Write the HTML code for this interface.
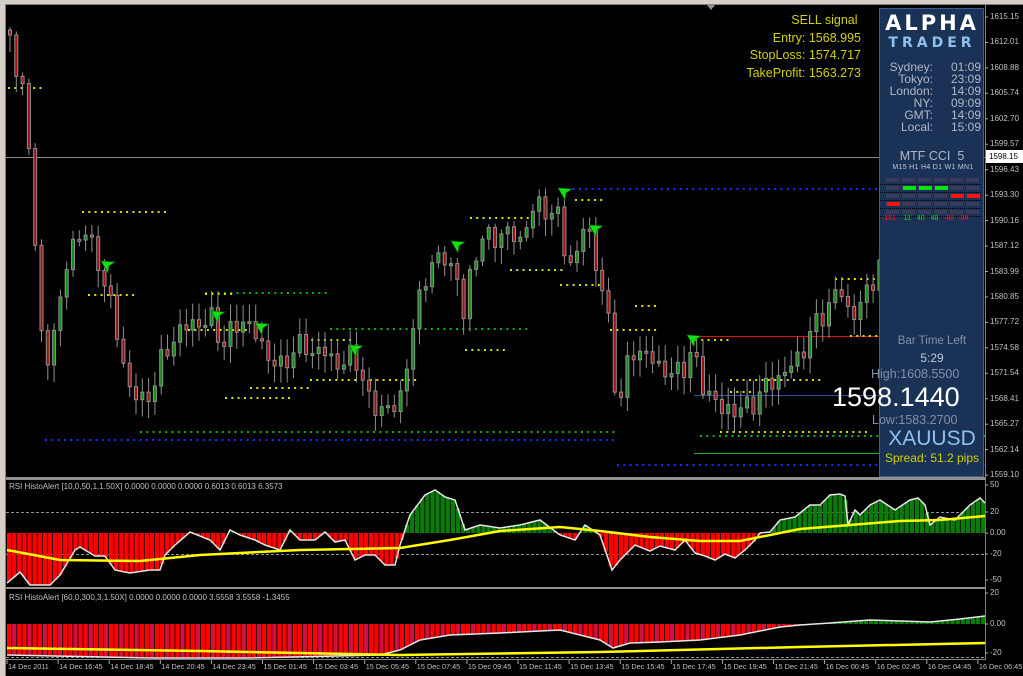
<!DOCTYPE html>
<html><head><meta charset="utf-8"><style>
html,body{margin:0;padding:0;background:#d4d0c8;}
#wrap{position:relative;width:1023px;height:676px;overflow:hidden;background:#000;font-family:"Liberation Sans",sans-serif;}
svg{position:absolute;left:0;top:0}
.t{position:absolute;white-space:nowrap;line-height:1.15}
</style></head><body><div id="wrap">
<svg id="s" width="1023" height="676" viewBox="0 0 1023 676"></svg>
<div class="t" style="left:700px;top:12px;width:161px;text-align:right;color:#d4d000;font-size:12.5px;line-height:17.5px">SELL signal&nbsp;<br>Entry: 1568.995<br>StopLoss: 1574.717<br>TakeProfit: 1563.273</div>
<div class="t" style="left:879px;top:11px;width:106px;text-align:center;color:#fff;font-weight:bold;font-size:21px;letter-spacing:3px;font-family:'DejaVu Sans',sans-serif">ALPHA</div>
<div class="t" style="left:879px;top:35px;width:106px;text-align:center;color:#8fc0f0;font-weight:bold;font-size:14px;letter-spacing:4px;font-family:'DejaVu Sans',sans-serif">TRADER</div>
<div class="t" style="left:880px;top:61px;width:53px;text-align:right;color:#b0b8c8;font-size:12px;line-height:12px">Sydney:<br>Tokyo:<br>London:<br>NY:<br>GMT:<br>Local:</div>
<div class="t" style="left:936px;top:61px;width:45px;text-align:right;color:#b0b8c8;font-size:12px;line-height:12px">01:09<br>23:09<br>14:09<br>09:09<br>14:09<br>15:09</div>
<div class="t" style="left:879px;top:149px;width:106px;text-align:center;color:#b0b8c8;font-size:12.5px">MTF CCI&nbsp; 5</div>
<div class="t" style="left:880px;top:164px;width:106px;text-align:center;color:#c0c8d8;font-size:7px;letter-spacing:.3px">M15 H1 H4 D1 W1 MN1</div>
<div class="t" style="left:879px;top:335px;width:106px;text-align:center;color:#8090a8;font-size:11.5px">Bar Time Left</div>
<div class="t" style="left:879px;top:352px;width:106px;text-align:center;color:#c0c8d8;font-size:12px">5:29</div>
<div class="t" style="left:871px;top:367px;color:#8090a8;font-size:12.5px">High:1608.5500</div>
<div class="t" style="left:832px;top:382px;color:#fff;font-size:27px">1598.1440</div>
<div class="t" style="left:872px;top:413px;color:#8090a8;font-size:12.5px">Low:1583.2700</div>
<div class="t" style="left:879px;top:427px;width:106px;text-align:center;color:#8fc0f0;font-size:21px">XAUUSD</div>
<div class="t" style="left:879px;top:452px;width:106px;text-align:center;color:#d4d000;font-size:12px">Spread: 51.2 pips</div>
<div class="t" style="left:9px;top:482px;color:#c0c0c0;font-size:8px">RSI HistoAlert [10,0,50,1,1.50X] 0.0000 0.0000 0.0000 0.6013 0.6013 6.3573</div>
<div class="t" style="left:9px;top:593px;color:#c0c0c0;font-size:8px">RSI HistoAlert [60,0,300,3,1.50X] 0.0000 0.0000 0.0000 3.5558 3.5558 -1.3455</div>
<div class="t" style="left:880px;top:215px;width:106px;font-size:7px;color:#ff2020">&nbsp;-161&nbsp;&nbsp;&nbsp;&nbsp;<span style="color:#10e010">11&nbsp;&nbsp;&nbsp;40&nbsp;&nbsp;&nbsp;48</span>&nbsp;&nbsp;&nbsp;-86&nbsp;&nbsp;-94</div>
<div id="tx"></div>
<script>
(function(){
var s=document.getElementById('s'),h='';
function L(a,b,c,d,col,w,dash){h+='<line x1="'+a+'" y1="'+b+'" x2="'+c+'" y2="'+d+'" stroke="'+col+'" stroke-width="'+(w||1)+'"'+(dash?' stroke-dasharray="'+dash+'"':'')+'/>';}
function R(x,y,w,hh,f,st){h+='<rect x="'+x+'" y="'+y+'" width="'+w+'" height="'+hh+'" fill="'+f+'"'+(st?' stroke="'+st+'" stroke-width="1"':'')+'/>';}
function interp(pts,x){for(var i=0;i<pts.length-2;i+=2){if(x>=pts[i]&&x<=pts[i+2]){var t=(x-pts[i])/(pts[i+2]-pts[i]);return pts[i+1]+t*(pts[i+3]-pts[i+1]);}}return x<pts[0]?pts[1]:pts[pts.length-1];}
R(0,0,1023,676,'#d4d0c8');R(5,4,1018,672,'#000');L(5.5,4,5.5,676,'#808080');L(5,4.5,1023,4.5,'#808080');
L(985.5,5,985.5,660,'#808080');
R(6,477,979,3,'#909090');R(6,587,979,2,'#909090');L(6,659.5,985,659.5,'#808080');
var pl=['1615.15','1612.01','1608.88','1605.74','1602.70','1599.57','1596.43','1593.30','1590.16','1587.12','1583.99','1580.85','1577.72','1574.58','1571.54','1568.41','1565.27','1562.14','1559.10'];
var tx='';
pl.forEach(function(p,i){var y=17+i*25.45;L(985,y,988,y,'#aaa');tx+='<div class="t" style="left:990px;top:'+(y-5)+'px;color:#c0c0c0;font-size:8px">'+p+'</div>';});
L(6,157.5,985,157.5,'#8a8a8a');
function D(x1,x2,y,col,step){for(var x=x1;x<x2;x+=step||6.3)R(x,y-1,2,2,col);}
D(45,615,440,'#1030ff');D(560,985,189,'#1030ff');D(617,985,465,'#1030ff');
D(140,615,432,'#10b010');D(700,985,436,'#10b010');D(205,330,293,'#10b010');D(330,530,329,'#10b010');
L(694,453.5,880,453.5,'#20b020');L(694,395.5,880,395.5,'#3050a0');L(694,336.5,880,336.5,'#e01010');
var Y='#e0e000';
D(8,40,88,Y);D(82,170,212,Y);D(88,135,295,Y);D(205,235,294,Y);D(188,245,330,Y);D(225,290,398,Y);D(250,310,388,Y);D(310,360,380,Y);D(305,350,340,Y);D(370,420,380,Y);D(470,530,218,Y);D(510,565,270,Y);D(465,505,350,Y);D(560,600,285,Y);D(575,605,200,Y);D(635,660,306,Y);D(610,655,330,Y);D(695,730,340,Y);D(730,820,380,Y);D(720,870,432,Y);D(730,750,392,Y);D(835,880,279,Y);D(850,880,336,Y);
var P=[8,30,14,70,20,92,28,150,35,270,42,380,50,340,58,300,66,260,74,240,82,225,90,250,100,272,108,300,116,340,125,380,132,395,140,402,150,390,160,360,170,340,180,330,190,322,200,325,210,318,220,345,230,332,240,318,250,330,260,345,270,362,280,368,290,350,300,345,310,352,320,350,330,360,340,365,350,355,358,365,366,400,374,410,382,405,392,410,400,395,408,340,418,300,428,260,436,262,446,258,456,280,462,320,470,262,480,238,490,240,500,232,510,236,520,240,528,214,536,205,546,210,556,218,566,262,574,262,584,212,592,258,600,290,608,330,616,415,624,370,632,350,640,352,650,360,660,368,670,375,680,370,690,350,700,385,710,395,720,412,730,408,740,410,750,404,760,390,770,382,780,375,790,365,800,352,810,330,820,315,830,300,840,290,850,322,860,300,870,282,878,262];
var prev=interp(P,8);
for(var i=0;i<139;i++){var x=8+i*6.3;var c=interp(P,x)+Math.sin(i*2.3)*8+Math.cos(i*1.7)*5;var o=prev;prev=c;
var bt=Math.min(o,c),bb=Math.max(o,c);if(bb-bt<2)bb=bt+2;
var wt=bt-3-Math.abs(Math.sin(i*3.1))*14,wb=bb+3+Math.abs(Math.cos(i*2.7))*14;
L(x+2,wt,x+2,wb,'#909090');R(x+0.5,bt,3,bb-bt,c<o?'#109010':'#a01010','#909090');}
[[108,268],[218,318],[262,330],[356,352],[458,248],[565,195],[596,232],[694,342]].forEach(function(a){var x=a[0],y=a[1];h+='<path d="M'+(x-7)+' '+(y-7)+' L'+x+' '+(y+5)+' L'+(x+1)+' '+(y-2)+' L'+(x+7)+' '+(y-6)+' Z" fill="#10e010" stroke="#006000" stroke-width=".6"/>';});
R(879.5,8.5,104,468,'#1a3256','#3c5f8e');
var rows=[178,186,194,202,210];
rows.forEach(function(y){for(var k=0;k<6;k++){R(886+k*16,y,13,4,'#3a3a5a');}L(880,y+6.5,982,y+6.5,'#000',1,'1 1');});
R(903,186,13,4,'#10e010');R(919,186,13,4,'#10e010');R(935,186,13,4,'#10e010');R(951,194,13,4,'#ff1010');R(967,194,13,4,'#ff1010');R(887,202,13,4,'#ff1010');
L(6,512.5,985,512.5,'#909090',1,'3 2');L(6,554.5,985,554.5,'#909090',1,'3 2');
var S1=[7,583,20,572,30,585,50,585,60,575,75,550,80,547,95,556,105,556,115,570,130,573,150,570,160,570,165,555,175,545,190,532,210,540,220,550,230,530,240,535,255,540,265,545,280,550,290,530,300,540,315,540,325,532,335,542,345,540,355,560,365,555,375,555,385,565,395,565,400,545,410,515,425,495,435,490,445,497,455,500,465,530,480,525,500,528,520,525,540,520,560,535,575,540,585,525,600,535,612,570,620,560,635,545,650,551,660,546,675,550,685,540,695,553,705,556,715,560,725,554,735,558,745,550,755,540,760,533,770,532,780,520,795,517,810,505,820,505,830,495,840,494,845,496,848,525,855,510,860,515,870,505,880,500,895,510,910,500,918,498,925,505,930,525,940,517,955,520,970,505,980,498,985,503];
var z=533;
for(var x=7;x<985;x+=5.1){var v=interp(S1,x+2);if(v>z){R(x,z,4.3,v-z,'#ff0000');}else{R(x,v,4.3,z-v,'#0a7a0a');}}
var pts='';for(var i=0;i<S1.length;i+=2)pts+=S1[i]+','+S1[i+1]+' ';h+='<polyline points="'+pts+'" fill="none" stroke="#e8e8e8" stroke-width="1.5"/>';
var M1=[7,550,60,560,140,561,200,555,300,550,400,548,450,540,500,531,560,527,600,531,650,537,700,541,740,541,800,529,850,525,900,521,940,520,985,516];
pts='';for(var i=0;i<M1.length;i+=2)pts+=M1[i]+','+M1[i+1]+' ';h+='<polyline points="'+pts+'" fill="none" stroke="#ffff00" stroke-width="2.5"/>';
L(6,657.5,985,657.5,'#909090',1,'3 2');
var S2=[7,655,150,658,250,658,380,655,400,650,420,640,450,635,500,633,560,630,600,640,613,648,630,643,660,642,700,640,740,635,780,627,800,625,830,623,870,620,900,621,930,622,960,619,985,616];
z=624;var j=0;
for(var x=7;x<985;x+=5.1,j++){var v=interp(S2,x+2);if(v>z){R(x,z,4.3,v-z,j%3==1?'#d01040':'#ff0000');}else{R(x,v,4.3,z-v,'#0a7a0a');}}
pts='';for(var i=0;i<S2.length;i+=2)pts+=S2[i]+','+S2[i+1]+' ';h+='<polyline points="'+pts+'" fill="none" stroke="#e8e8e8" stroke-width="1.5"/>';
h+='<polyline points="7,648 200,651 400,655 600,652 800,647 985,643" fill="none" stroke="#ffff00" stroke-width="2.5"/>';
[['50',485],['20',512],['0.00',533],['-20',554],['-50',580],['20',593],['0.00',624],['-20',653]].forEach(function(a){L(985,a[1],988,a[1],'#aaa');tx+='<div class="t" style="left:990px;top:'+(a[1]-5)+'px;color:#c0c0c0;font-size:8px">'+a[0]+'</div>';});
R(986,150,37,13,'#fff');
tx+='<div class="t" style="left:989px;top:152px;color:#000;font-size:8px">1598.15</div>';
var tl=['14 Dec 2011','14 Dec 16:45','14 Dec 18:45','14 Dec 20:45','14 Dec 23:45','15 Dec 01:45','15 Dec 03:45','15 Dec 05:45','15 Dec 07:45','15 Dec 09:45','15 Dec 11:45','15 Dec 13:45','15 Dec 15:45','15 Dec 17:45','15 Dec 19:45','15 Dec 21:45','16 Dec 00:45','16 Dec 02:45','16 Dec 04:45','16 Dec 06:45'];
tl.forEach(function(t,i){var x=7+i*51.1;L(x,660,x,664,'#aaa');tx+='<div class="t" style="left:'+(x+1)+'px;top:663px;color:#c0c0c0;font-size:7.3px">'+t+'</div>';});
h+='<path d="M707 5 L715 5 L711 10 Z" fill="#909090"/>';
s.innerHTML=h;document.getElementById('tx').innerHTML=tx;
})();
</script>
</div></body></html>
